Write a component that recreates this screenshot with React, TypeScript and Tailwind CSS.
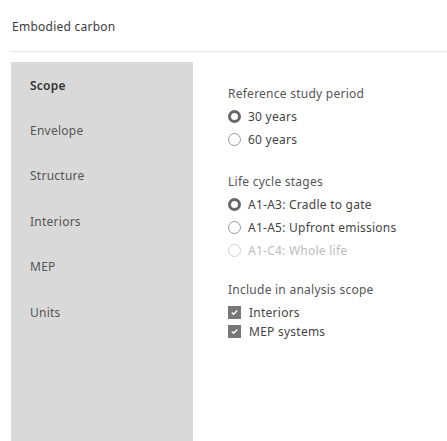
import React from "react";

const font = { fontFamily: '"Noto Sans", "Open Sans", sans-serif' };

function Radio({ label, checked, disabled }: { label: string; checked?: boolean; disabled?: boolean }) {
  return (
    <div className="flex h-[23px] items-center">
      <span
        className={
          checked
            ? "box-border h-[13px] w-[13px] rounded-full border-[3.5px] border-[#666666] bg-white"
            : disabled
            ? "box-border h-[13px] w-[13px] rounded-full border border-[#d4d4d4] bg-white"
            : "box-border h-[13px] w-[13px] rounded-full border border-[#9a9a9a] bg-white"
        }
      />
      <span className={disabled ? "ml-[7px] text-[12px] text-[#bdbdbd]" : "ml-[7px] text-[12px] text-[#444444]"}>
        {label}
      </span>
    </div>
  );
}

function Check({ label }: { label: string }) {
  return (
    <div className="flex h-[19px] items-center">
      <span className="flex h-[13px] w-[13px] items-center justify-center bg-[#777777]">
        <svg width="9" height="9" viewBox="0 0 9 9">
          <path d="M1.8 4.6 L3.6 6.3 L7.2 2.6" fill="none" stroke="white" strokeWidth="1.4" />
        </svg>
      </span>
      <span className="ml-[8px] text-[12px] text-[#444444]">{label}</span>
    </div>
  );
}

export default function App() {
  const items = ["Scope", "Envelope", "Structure", "Interiors", "MEP", "Units"];
  return (
    <div className="h-[441px] w-[447px] overflow-hidden bg-white tracking-[0.25px]" style={font}>
      <div className="ml-[11px] flex h-[52px] items-center border-b border-[#e6e6e6] pt-[2px]">
        <span className="ml-[1px] text-[12px] text-[#3c3c3c]">Embodied carbon</span>
      </div>
      <div className="ml-[11px] mt-[10px] flex">
        <div className="h-[379px] w-[182px] bg-[#d9d9d9] pt-[1px]">
          {items.map((it, i) => (
            <div
              key={it}
              className={
                i === 0
                  ? "flex h-[45.4px] items-center pl-[19px] text-[12px] font-semibold text-[#333333]"
                  : "flex h-[45.4px] items-center pl-[19px] text-[12px] text-[#555555]"
              }
            >
              {it}
            </div>
          ))}
        </div>
        <div className="ml-[35px] flex flex-col pt-[21px]">
          <div className="flex h-[22px] items-center text-[12px] text-[#555555]">Reference study period</div>
          <Radio label="30 years" checked />
          <Radio label="60 years" />
          <div className="mt-[20px] flex h-[22px] items-center text-[12px] text-[#555555]">Life cycle stages</div>
          <Radio label="A1-A3: Cradle to gate" checked />
          <Radio label="A1-A5: Upfront emissions" />
          <Radio label="A1-C4: Whole life" disabled />
          <div className="mt-[17px] flex h-[22px] items-center text-[12px] text-[#555555]">Include in analysis scope</div>
          <div className="mt-[2px]">
            <Check label="Interiors" />
            <Check label="MEP systems" />
          </div>
        </div>
      </div>
    </div>
  );
}
